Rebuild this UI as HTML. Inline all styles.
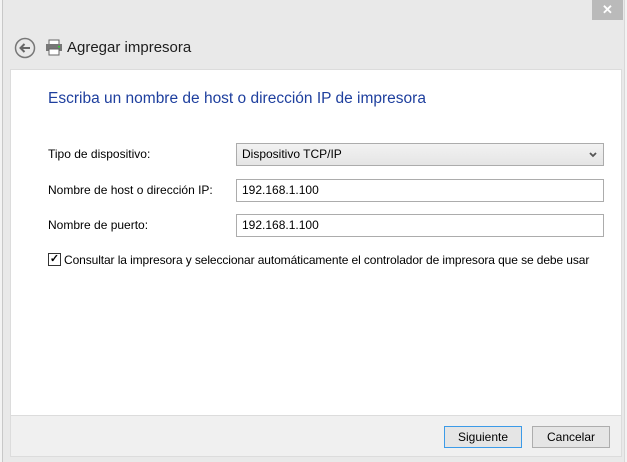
<!DOCTYPE html>
<html><head><meta charset="utf-8"><style>
*{margin:0;padding:0;box-sizing:border-box}
body{width:627px;height:462px;background:#f3f3f3;font-family:"Segoe UI","Liberation Sans",sans-serif;font-size:12px;color:#000;position:relative;overflow:hidden}
.win{position:absolute;left:2px;top:0;width:623px;height:462px;background:#e9e9e9;border-left:1px solid #c8c8c8;border-right:1px solid #d8d8d8}
.close{position:absolute;left:592px;top:0;width:31px;height:20px;background:#bababa;color:#fff;text-align:center;font-size:13px;line-height:20px;font-weight:bold}
.panel{position:absolute;left:10px;top:69px;width:612px;height:347px;background:#fff;border:1px solid #dcdcdc}
.foot{position:absolute;left:10px;top:416px;width:612px;height:41px;border:1px solid #dcdcdc;border-top:none;background:#f0f0f0}
.a{position:absolute;white-space:nowrap}
.box{position:absolute;border:1px solid #acacac;background:#fff;height:23px;padding:3px 5px;font-size:12px}
.btn{position:absolute;top:426px;width:78px;height:22px;border:1px solid #adadad;background:#e5e5e5;text-align:center;line-height:20px;font-size:12px}
</style></head><body>
<div class="win"></div>
<div class="close">✕</div>
<svg class="a" style="left:14px;top:37px" width="22" height="22" viewBox="0 0 22 22"><circle cx="11" cy="11" r="9.5" fill="none" stroke="#777" stroke-width="1.5"/><path d="M16 11H6.5M10.5 7L6.5 11l4 4" fill="none" stroke="#666" stroke-width="2"/></svg>
<svg class="a" style="left:45px;top:39px" width="18" height="17" viewBox="0 0 18 17"><rect x="4" y="1" width="10" height="5" fill="#fff" stroke="#666"/><rect x="1" y="5" width="16" height="7" fill="#777"/><rect x="4" y="10" width="10" height="6" fill="#fff" stroke="#666"/><rect x="13" y="7" width="2" height="1.5" fill="#3c3"/></svg>
<div class="a" style="left:67px;top:39px;font-size:15px;color:#1e1e1e">Agregar impresora</div>
<div class="panel"></div>
<div class="foot"></div>
<div class="a" style="left:48px;top:90px;font-size:15.5px;color:#1e3f9e">Escriba un nombre de host o dirección IP de impresora</div>
<div class="a" style="left:48px;top:147px">Tipo de dispositivo:</div>
<div class="a" style="left:48px;top:183px">Nombre de host o dirección IP:</div>
<div class="a" style="left:48px;top:218px">Nombre de puerto:</div>
<div class="box" style="left:236px;top:143px;width:368px;background:linear-gradient(#f2f2f2,#e5e5e5)">Dispositivo TCP/IP<svg style="position:absolute;right:6px;top:8px" width="8" height="6" viewBox="0 0 8 6"><path d="M1 1l3 3 3-3" fill="none" stroke="#555" stroke-width="1.8"/></svg></div>
<div class="box" style="left:236px;top:179px;width:368px">192.168.1.100</div>
<div class="box" style="left:236px;top:214px;width:368px">192.168.1.100</div>
<div class="a" style="left:48px;top:253px;width:13px;height:13px;border:1px solid #333;background:#fff;font-size:11px;line-height:11px;text-align:center;font-weight:bold">✓</div>
<div class="a" style="left:64px;top:253px;letter-spacing:-0.1px">Consultar la impresora y seleccionar automáticamente el controlador de impresora que se debe usar</div>
<div class="btn" style="left:444px;border-color:#3c9be8">Siguiente</div>
<div class="btn" style="left:532px">Cancelar</div>
</body></html>
